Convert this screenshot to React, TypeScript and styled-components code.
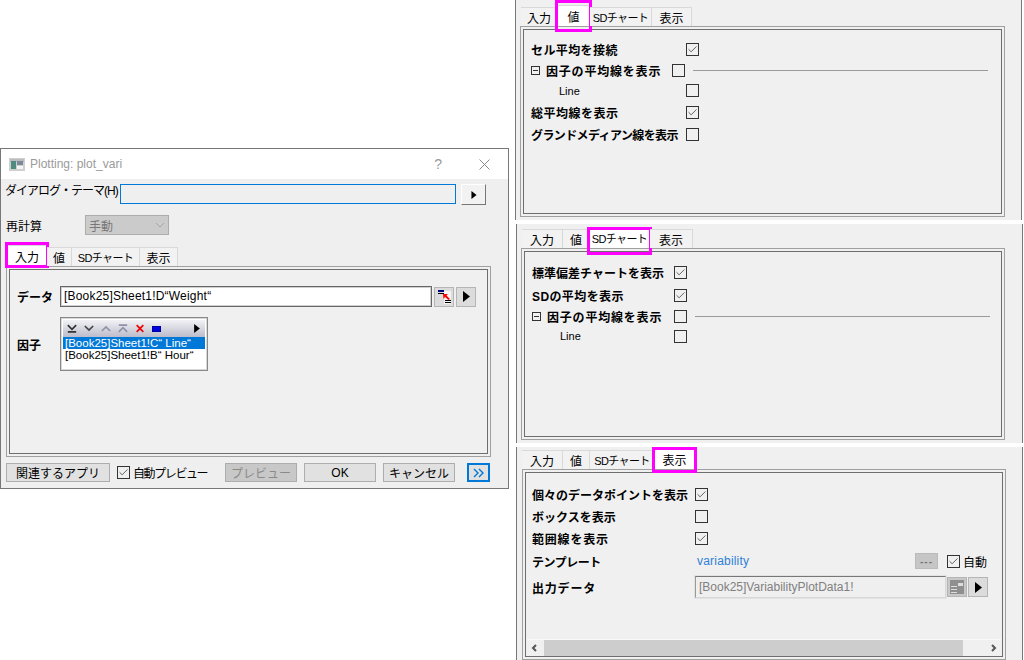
import React from "react";
import styled, { createGlobalStyle } from "styled-components";
import { FiCheck } from "react-icons/fi";

const GlobalStyle = createGlobalStyle`
	html, body {
		margin: 0;
		padding: 0;
		background: #fff;
		font-family: "Liberation Sans", "Noto Sans CJK JP", sans-serif;
		font-size: 12px;
		color: #000;
	}
`;

const Page = styled.div`
	width: 1024px;
	height: 660px;
	display: flex;
	overflow: hidden;
	background: #fff;
`;

const LeftColumn = styled.div`
	width: 515px;
	padding-top: 148px;
	box-sizing: border-box;
`;

const RightColumn = styled.div`
	width: 509px;
	display: flex;
	flex-direction: column;
	gap: 4px;
`;

const Dialog = styled.div`
	width: 509px;
	height: 341px;
	box-sizing: border-box;
	border: 1px solid #787878;
	background: #efefef;
	display: flex;
	flex-direction: column;
`;

const TitleBar = styled.div`
	height: 30px;
	background: #fff;
	display: flex;
	align-items: center;
	padding: 0 18px 0 8px;
	gap: 5px;
	color: #9a9a9a;
	font-size: 12px;
`;

const TitleText = styled.span`
	flex: 1;
`;

const Help = styled.span`
	font-size: 14px;
	margin-right: 32px;
`;

const Body = styled.div`
	flex: 1;
	display: flex;
	flex-direction: column;
	padding: 5px 5px 0 4px;
`;

const ThemeRow = styled.div`
	display: flex;
	align-items: flex-start;
	height: 21px;
`;

const ThemeLabel = styled.span`
	width: 115px;
	line-height: 14px;
	white-space: nowrap;
	letter-spacing: -1px;
`;

const ThemeInput = styled.div`
	width: 336px;
	height: 20px;
	box-sizing: border-box;
	border: 1px solid #0078d7;
	background: #efefef;
`;

const BevelButton = styled.div`
	width: 25px;
	height: 21px;
	margin-left: 5px;
	box-sizing: border-box;
	background: #f2f2f2;
	border: 1px solid #fff;
	border-right-color: #777;
	border-bottom-color: #777;
	display: flex;
	align-items: center;
	justify-content: center;
`;

const RecalcRow = styled.div`
	display: flex;
	align-items: center;
	height: 20px;
	margin-top: 10px;
	padding-left: 1px;
`;

const RecalcLabel = styled.span`
	width: 79px;
`;

const DisabledSelect = styled.div`
	width: 84px;
	height: 20px;
	box-sizing: border-box;
	background: #cbcbcb;
	border: 1px solid #adadad;
	color: #777;
	display: flex;
	align-items: center;
	justify-content: space-between;
	padding: 0 3px;
`;

const Tabs = styled.div<{ $top: number; $left: number }>`
	display: flex;
	height: 19px;
	margin: ${(p) => p.$top}px 0 0 ${(p) => p.$left}px;
	position: relative;
	z-index: 1;
`;

const Tab = styled.div<{
	$w: number;
	$active?: boolean;
	$small?: boolean;
	$markTop: number;
	$markBottom: number;
}>`
	width: ${(p) => p.$w}px;
	box-sizing: border-box;
	height: ${(p) => (p.$active ? 21 : 19)}px;
	margin-top: ${(p) => (p.$active ? -2 : 0)}px;
	background: ${(p) => (p.$active ? "#fff" : "#f2f2f2")};
	border-top: 1px solid #d9d9d9;
	border-right: 1px solid #d9d9d9;
	display: flex;
	align-items: center;
	justify-content: center;
	position: relative;
	white-space: nowrap;
	font-size: ${(p) => (p.$small ? 11 : 12)}px;
	letter-spacing: ${(p) => (p.$small ? -0.6 : 0)}px;
	${(p) =>
		p.$active &&
		`
		&::after {
			content: "";
			position: absolute;
			top: ${p.$markTop + 1}px;
			left: -3px;
			right: -3px;
			bottom: ${19 - p.$markBottom}px;
			border: 3px solid #ff00ff;
			pointer-events: none;
		}
	`}
`;

const TabPage = styled.div<{ $w: number; $h: number; $ml: number }>`
	width: ${(p) => p.$w}px;
	height: ${(p) => p.$h}px;
	margin-left: ${(p) => p.$ml}px;
	box-sizing: border-box;
	border: 1px solid #a0a0a0;
	padding: 2px;
	background: #f0f0f0;
	flex: none;
`;

const TabInner = styled.div`
	position: relative;
	height: 100%;
	box-sizing: border-box;
	border: 1px solid #6e6e6e;
	display: flex;
	flex-direction: column;
`;

const InputPage = styled.div`
	padding: 16px 0 0 7px;
	display: flex;
	flex-direction: column;
`;

const FieldRow = styled.div`
	display: flex;
	align-items: center;
	height: 21px;
	gap: 1px;
`;

const BoldLabel = styled.span<{ $w?: number; $ls?: number }>`
	font-weight: 700;
	white-space: nowrap;
	flex: none;
	letter-spacing: ${(p) => p.$ls ?? 0}px;
	${(p) => p.$w && `width: ${p.$w}px;`}
`;

const DataInput = styled.div`
	width: 372px;
	height: 21px;
	box-sizing: border-box;
	border: 1px solid #666;
	box-shadow: inset 0 0 0 1px #d0d0d0;
	background: #fff;
	padding-left: 3px;
	line-height: 19px;
	letter-spacing: 0.2px;
`;

const MiniButton = styled.div<{ $shade?: boolean }>`
	width: 20px;
	height: 20px;
	box-sizing: border-box;
	background: ${(p) => (p.$shade ? "#c8c8c8" : "#dcdcdc")};
	border: 1px solid #b5b5b5;
	display: flex;
	align-items: center;
	justify-content: center;
	margin-left: 1px;
	flex: none;
`;

const FactorRow = styled.div`
	display: flex;
	align-items: center;
	margin-top: 10px;
`;

const ListBox = styled.div`
	width: 148px;
	height: 54px;
	box-sizing: border-box;
	border: 1px solid #888;
	box-shadow: inset 0 0 0 1px #d8d8d8;
	background: #fff;
	padding: 2px;
`;

const ListToolbar = styled.div`
	height: 17px;
	background: linear-gradient(#f2f2f6, #bcbccb);
	display: flex;
	align-items: center;
	padding: 0 5px 0 4px;
	gap: 7px;
`;

const ListArrow = styled.span`
	margin-left: auto;
	display: flex;
`;

const ListItem = styled.div<{ $selected?: boolean }>`
	height: 12px;
	line-height: 12px;
	font-size: 11.5px;
	padding-left: 2px;
	white-space: nowrap;
	background: ${(p) => (p.$selected ? "#0078d7" : "#fff")};
	color: ${(p) => (p.$selected ? "#fff" : "#000")};
`;

const Footer = styled.div`
	display: flex;
	align-items: center;
	height: 19px;
	margin-top: 6px;
	padding-left: 1px;
`;

const FooterButton = styled.div<{ $w: number; $ml?: number; $disabled?: boolean }>`
	width: ${(p) => p.$w}px;
	height: 19px;
	margin-left: ${(p) => p.$ml ?? 0}px;
	box-sizing: border-box;
	background: ${(p) => (p.$disabled ? "#c8c8c8" : "#e1e1e1")};
	border: 1px solid #adadad;
	color: ${(p) => (p.$disabled ? "#8a8a8a" : "#000")};
	display: flex;
	align-items: center;
	justify-content: center;
	flex: none;
`;

const ExpandButton = styled.div`
	width: 23px;
	height: 19px;
	margin-left: 12px;
	box-sizing: border-box;
	background: #e1e1e1;
	border: 2px solid #0078d7;
	display: flex;
	align-items: center;
	justify-content: center;
	flex: none;
`;

const Box = styled.div<{ $ml?: number }>`
	width: 13px;
	height: 13px;
	flex: none;
	margin-left: ${(p) => p.$ml ?? 0}px;
	box-sizing: border-box;
	border: 1px solid #333;
	background: transparent;
	display: flex;
	align-items: center;
	justify-content: center;
	color: #555;
`;

const CheckText = styled.span<{ $w?: number; $ls?: number }>`
	margin-left: 3px;
	white-space: nowrap;
	flex: none;
	letter-spacing: ${(p) => p.$ls ?? 0}px;
	${(p) => p.$w && `width: ${p.$w}px;`}
`;

const Shot = styled.div<{ $h: number; $ml: number }>`
	width: 507px;
	height: ${(p) => p.$h}px;
	margin-left: ${(p) => p.$ml}px;
	background: #f0f0f0;
	border-left: 1px solid #777;
	border-right: 1px solid #777;
	display: flex;
	flex-direction: column;
	box-sizing: border-box;
	overflow: hidden;
`;

const OptionRows = styled.div<{ $top: number; $left?: number }>`
	padding: ${(p) => p.$top}px 0 0 ${(p) => p.$left ?? 7}px;
	display: flex;
	flex-direction: column;
`;

const OptionRow = styled.div<{ $h: number }>`
	display: flex;
	align-items: center;
	height: ${(p) => p.$h}px;
`;

const Minus = styled.span`
	width: 9px;
	height: 9px;
	box-sizing: border-box;
	border: 1px solid #333;
	margin-right: 6px;
	flex: none;
	display: flex;
	align-items: center;
	justify-content: center;
	&::before {
		content: "";
		width: 5px;
		height: 1px;
		background: #333;
	}
`;

const Rule = styled.div<{ $w: number }>`
	width: ${(p) => p.$w}px;
	height: 1px;
	background: #9a9a9a;
	margin-left: 8px;
`;

const SubLabel = styled.span<{ $w: number }>`
	font-size: 11px;
	padding-left: 28px;
	width: ${(p) => p.$w}px;
	box-sizing: border-box;
	flex: none;
`;

const LinkText = styled.span`
	color: #2f7fd6;
	font-size: 12px;
	width: 220px;
	padding-left: 2px;
	box-sizing: border-box;
	letter-spacing: 0.2px;
	flex: none;
`;

const GhostInput = styled.div`
	width: 251px;
	height: 22px;
	box-sizing: border-box;
	border: 1px solid #d8d8d8;
	border-top-color: #777;
	border-left-color: #999;
	box-shadow: 0 0 0 1px #e2e2e2;
	background: #efefef;
	color: #808080;
	padding-left: 3px;
	line-height: 20px;
	white-space: nowrap;
	flex: none;
`;

const DotsButton = styled.div`
	width: 23px;
	height: 16px;
	background: #c6c6c6;
	border: 1px solid #bbb;
	box-sizing: border-box;
	color: #777;
	font-size: 10px;
	font-weight: 700;
	display: flex;
	align-items: center;
	justify-content: center;
	letter-spacing: 1px;
	flex: none;
`;

const HScroll = styled.div`
	position: absolute;
	left: 1px;
	right: 1px;
	bottom: 0;
	height: 16px;
	background: #f0f0f0;
	border-top: 1px solid #fafafa;
	display: flex;
	align-items: center;
	justify-content: space-between;
	padding: 0 4px;
`;

const HThumb = styled.div`
	position: absolute;
	left: 17px;
	width: 419px;
	top: 0;
	bottom: 0;
	background: #cdcdcd;
`;

const Check = ({ on, ml }: { on?: boolean; ml?: number }) => (
	<Box $ml={ml}>{on && <FiCheck size={11} strokeWidth={2} />}</Box>
);

const Arrow = ({ w = 7, h = 11 }: { w?: number; h?: number }) => (
	<svg width={w} height={h} viewBox="0 0 7 11">
		<path d="M0 0 L7 5.5 L0 11 Z" fill="#000" />
	</svg>
);

const WindowIcon = () => (
	<svg width="16" height="13" viewBox="0 0 16 13">
		<rect width="16" height="13" fill="#d0d0d0" />
		<rect x="1" y="1" width="14" height="3" fill="#bcbcbc" />
		<rect x="2" y="3" width="5" height="8" fill="#4f8a80" />
		<rect x="8" y="3" width="6" height="4" fill="#7a8a9a" />
		<rect x="8" y="8" width="6" height="3" fill="#f4f4f4" />
	</svg>
);

const CloseIcon = () => (
	<svg width="11" height="11" viewBox="0 0 11 11">
		<path d="M0.5 0.5 L10.5 10.5 M10.5 0.5 L0.5 10.5" stroke="#8a8a8a" strokeWidth="1" />
	</svg>
);

const ChevronDown = () => (
	<svg width="10" height="6" viewBox="0 0 10 6">
		<path d="M1 1 L5 5 L9 1" stroke="#a8a8a8" fill="none" />
	</svg>
);

const DoubleChevron = () => (
	<svg width="11" height="10" viewBox="0 0 11 10">
		<path d="M1 1 L5 5 L1 9 M6 1 L10 5 L6 9" stroke="#0078d7" strokeWidth="1.4" fill="none" />
	</svg>
);

const ScrollChevron = ({ left }: { left?: boolean }) => (
	<svg width="6" height="8" viewBox="0 0 6 8" style={{ position: "relative" }}>
		<path d={left ? "M5 1 L2 4 L5 7" : "M1 1 L4 4 L1 7"} stroke="#555" strokeWidth="2" fill="none" />
	</svg>
);

const PickIcon = () => (
	<svg width="13" height="14" viewBox="0 0 13 14">
		<rect y="0" width="6" height="2" fill="#000080" />
		<rect y="3" width="6" height="1" fill="#000" />
		<rect x="6" y="1" width="7" height="13" fill="#f4f4f4" />
		<path d="M5 4 L10 4 L8.5 5.5 L12 9 L10.5 10 L7 7 L5.5 9 Z" fill="#f00" />
		<rect x="7" y="10" width="6" height="1" fill="#000" />
		<rect x="7" y="12" width="6" height="1" fill="#000" />
	</svg>
);

const SheetIcon = () => (
	<svg width="14" height="14" viewBox="0 0 14 14">
		<rect width="14" height="14" fill="#8f8f8f" />
		<rect x="1" y="6" width="6" height="1" fill="#ddd" />
		<rect x="1" y="9" width="6" height="1" fill="#ddd" />
		<rect x="1" y="12" width="6" height="1" fill="#ddd" />
		<rect x="8" y="3" width="5" height="3" fill="#ddd" />
	</svg>
);

const ToolIcon = ({ d, color }: { d: string; color: string }) => (
	<svg width="10" height="9" viewBox="0 0 12 10">
		<path d={d} fill="none" stroke={color} strokeWidth="2" />
	</svg>
);

const ListTools = () => (
	<ListToolbar>
		<ToolIcon d="M1 1 L6 6 L11 1 M1 9 L11 9" color="#333" />
		<ToolIcon d="M1 2 L6 7 L11 2" color="#444" />
		<ToolIcon d="M1 8 L6 3 L11 8" color="#8d93a8" />
		<ToolIcon d="M1 1 L11 1 M1 9 L6 4 L11 9" color="#8d93a8" />
		<ToolIcon d="M2 1 L10 9 M10 1 L2 9" color="#f00000" />
		<svg width="9" height="6" viewBox="0 0 9 6">
			<rect width="9" height="6" fill="#0000e0" stroke="#000060" />
		</svg>
		<ListArrow>
			<Arrow w={6} h={9} />
		</ListArrow>
	</ListToolbar>
);

const TabStrip = ({
	active,
	top,
	left,
	widths,
	mark,
}: {
	active: number;
	top: number;
	left: number;
	widths: number[];
	mark: [number, number];
}) => (
	<Tabs $top={top} $left={left}>
		{["入力", "値", "SDチャート", "表示"].map((label, i) => (
			<Tab
				key={label}
				$w={widths[i]}
				$active={i === active}
				$small={i === 2}
				$markTop={mark[0]}
				$markBottom={mark[1]}
			>
				{label}
			</Tab>
		))}
	</Tabs>
);

const MainDialog = () => (
	<Dialog>
		<TitleBar>
			<WindowIcon />
			<TitleText>Plotting: plot_vari</TitleText>
			<Help>?</Help>
			<CloseIcon />
		</TitleBar>
		<Body>
			<ThemeRow>
				<ThemeLabel>ダイアログ・テーマ(H)</ThemeLabel>
				<ThemeInput />
				<BevelButton>
					<Arrow w={6} h={8} />
				</BevelButton>
			</ThemeRow>
			<RecalcRow>
				<RecalcLabel>再計算</RecalcLabel>
				<DisabledSelect>
					手動
					<ChevronDown />
				</DisabledSelect>
			</RecalcRow>
			<TabStrip active={0} top={12} left={3} widths={[39, 25, 68, 38]} mark={[-5, 21]} />
			<TabPage $w={485} $h={191} $ml={1}>
				<TabInner>
					<InputPage>
						<FieldRow>
							<BoldLabel $w={42}>データ</BoldLabel>
							<DataInput>[Book25]Sheet1!D“Weight“</DataInput>
							<MiniButton>
								<PickIcon />
							</MiniButton>
							<MiniButton>
								<Arrow />
							</MiniButton>
						</FieldRow>
						<FactorRow>
							<BoldLabel $w={43}>因子</BoldLabel>
							<ListBox>
								<ListTools />
								<ListItem $selected>[Book25]Sheet1!C“ Line“</ListItem>
								<ListItem>[Book25]Sheet1!B“ Hour“</ListItem>
							</ListBox>
						</FactorRow>
					</InputPage>
				</TabInner>
			</TabPage>
			<Footer>
				<FooterButton $w={104}>関連するアプリ</FooterButton>
				<Check on ml={7} />
				<CheckText $w={75} $ls={-1.4}>
					自動プレビュー
				</CheckText>
				<FooterButton $w={72} $ml={17} $disabled>
					プレビュー
				</FooterButton>
				<FooterButton $w={72} $ml={7}>
					OK
				</FooterButton>
				<FooterButton $w={72} $ml={7}>
					キャンセル
				</FooterButton>
				<ExpandButton>
					<DoubleChevron />
				</ExpandButton>
			</Footer>
		</Body>
	</Dialog>
);

const ValuePanel = () => (
	<Shot $h={220} $ml={0}>
		<TabStrip active={1} top={7} left={5} widths={[37, 32, 62, 40]} mark={[-7, 25]} />
		<TabPage $w={485} $h={191} $ml={4}>
			<TabInner>
				<OptionRows $top={9}>
					<OptionRow $h={21}>
						<BoldLabel $w={155} $ls={0.4}>
							セル平均を接続
						</BoldLabel>
						<Check on />
					</OptionRow>
					<OptionRow $h={20}>
						<Minus />
						<BoldLabel $w={126} $ls={0.8}>
							因子の平均線を表示
						</BoldLabel>
						<Check />
						<Rule $w={295} />
					</OptionRow>
					<OptionRow $h={21}>
						<SubLabel $w={155}>Line</SubLabel>
						<Check />
					</OptionRow>
					<OptionRow $h={22}>
						<BoldLabel $w={155} $ls={0.5}>
							総平均線を表示
						</BoldLabel>
						<Check on />
					</OptionRow>
					<OptionRow $h={22}>
						<BoldLabel $w={155} $ls={-0.6}>
							グランドメディアン線を表示
						</BoldLabel>
						<Check />
					</OptionRow>
				</OptionRows>
			</TabInner>
		</TabPage>
	</Shot>
);

const ChartPanel = () => (
	<Shot $h={219} $ml={1}>
		<TabStrip active={2} top={5} left={5} widths={[41, 27, 60, 43]} mark={[-2, 26]} />
		<TabPage $w={484} $h={192} $ml={4}>
			<TabInner>
				<OptionRows $top={9}>
					<OptionRow $h={22}>
						<BoldLabel $w={142}>標準偏差チャートを表示</BoldLabel>
						<Check on />
					</OptionRow>
					<OptionRow $h={24}>
						<BoldLabel $w={142} $ls={0.4}>
							SDの平均を表示
						</BoldLabel>
						<Check on />
					</OptionRow>
					<OptionRow $h={18}>
						<Minus />
						<BoldLabel $w={127} $ls={0.8}>
							因子の平均線を表示
						</BoldLabel>
						<Check />
						<Rule $w={295} />
					</OptionRow>
					<OptionRow $h={22}>
						<SubLabel $w={142}>Line</SubLabel>
						<Check />
					</OptionRow>
				</OptionRows>
			</TabInner>
		</TabPage>
	</Shot>
);

const DisplayPanel = () => (
	<Shot $h={213} $ml={1}>
		<TabStrip active={3} top={3} left={5} widths={[41, 27, 65, 40]} mark={[-3, 23]} />
		<TabPage $w={484} $h={191} $ml={5}>
			<TabInner>
				<OptionRows $top={10} $left={6}>
					<OptionRow $h={22}>
						<BoldLabel $w={163}>個々のデータポイントを表示</BoldLabel>
						<Check on />
					</OptionRow>
					<OptionRow $h={22}>
						<BoldLabel $w={163}>ボックスを表示</BoldLabel>
						<Check />
					</OptionRow>
					<OptionRow $h={22}>
						<BoldLabel $w={163} $ls={0.8}>
							範囲線を表示
						</BoldLabel>
						<Check on />
					</OptionRow>
					<OptionRow $h={24}>
						<BoldLabel $w={163} $ls={-0.5}>
							テンプレート
						</BoldLabel>
						<LinkText>variability</LinkText>
						<DotsButton>---</DotsButton>
						<Check on ml={9} />
						<CheckText>自動</CheckText>
					</OptionRow>
					<OptionRow $h={28}>
						<BoldLabel $w={163} $ls={0.8}>
							出力データ
						</BoldLabel>
						<GhostInput>[Book25]VariabilityPlotData1!</GhostInput>
						<MiniButton $shade>
							<SheetIcon />
						</MiniButton>
						<MiniButton>
							<Arrow />
						</MiniButton>
					</OptionRow>
				</OptionRows>
				<HScroll>
					<HThumb />
					<ScrollChevron left />
					<ScrollChevron />
				</HScroll>
			</TabInner>
		</TabPage>
	</Shot>
);

const App: React.FC = () => (
	<Page>
		<GlobalStyle />
		<LeftColumn>
			<MainDialog />
		</LeftColumn>
		<RightColumn>
			<ValuePanel />
			<ChartPanel />
			<DisplayPanel />
		</RightColumn>
	</Page>
);

export default App;
